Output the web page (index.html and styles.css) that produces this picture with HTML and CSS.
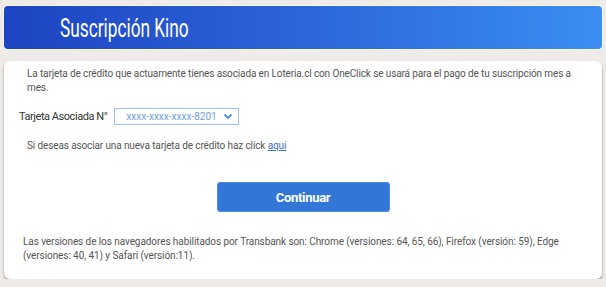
FILE: index.html
```html
<!DOCTYPE html>
<html lang="es">

<head>
  <meta charset="UTF-8" />
  <meta name="viewport" content="width=device-width, initial-scale=1" />
  <title>Suscripción Kino</title>
  <link rel="stylesheet" href="styles.css">
</head>

<body>

  <header class="titulo">
    <h1><span>Suscripción Kino</span></h1>
  </header>

  <div class="card">
    <p class="intro">La tarjeta de crédito que actuamente tienes asociada en Loteria.cl con OneClick se usará para el pago de tu suscripción mes a mes.</p>

    <div class="campo">
      <label for="tarjeta">Tarjeta Asociada N°</label>
      <div class="select">
        <span>xxxx-xxxx-xxxx-8201</span>
        <svg width="10" height="7" viewBox="0 0 10 7"><path d="M1.5 1.5 L5 5 L8.5 1.5" fill="none" stroke="#4a8ee6" stroke-width="1.8"/></svg>
      </div>
    </div>

    <p class="nueva">Si deseas asociar una nueva tarjeta de crédito haz click <a href="#">aquí</a></p>

    <div class="acciones">
      <button>Continuar</button>
    </div>

    <p class="nota">Las versiones de los navegadores habilitados por Transbank son: Chrome (versiones: 64, 65, 66), Firefox (versión: 59), Edge (versiones: 40, 41) y Safari (versión:11).</p>
  </div>

</body>

</html>
```

FILE: styles.css
```css
html,
body {
  font-family: 'Roboto', sans-serif;
  background: #efebe9;
  margin: 0;
  padding: 0;
}

body {
  padding: 6px 4px 0 4px;
}

.titulo {
  height: 43px;
  border-radius: 4px;
  background: linear-gradient(90deg, #1d44c2 0%, #2a62d6 45%, #3b8ef2 100%);
  box-shadow: 0 0 0 1px rgba(255, 255, 255, 0.6);
  display: flex;
  align-items: center;
  padding-left: 56px;
}

.titulo h1 {
  margin: 0 0 -2px 0;
  color: white;
  font-size: 25px;
  font-weight: 400;
}

.titulo h1 span {
  display: inline-block;
  transform: scaleX(0.69);
  transform-origin: left center;
}

.card {
  margin-top: 12px;
  background: white;
  border-radius: 6px;
  box-shadow: 0 2px 3px rgba(0, 0, 0, 0.35);
  padding: 6px 19px 12px 19px;
  height: 200px;
}

.intro {
  margin: 0;
  padding-left: 4px;
  font-size: 10px;
  line-height: 14px;
  letter-spacing: -0.12px;
  color: #555;
}

.campo {
  display: flex;
  align-items: center;
  gap: 7px;
  margin-top: 13px;
  margin-left: -4px;
}

.campo label {
  font-size: 11px;
  letter-spacing: -0.45px;
  color: #333;
}

.select {
  width: 107px;
  height: 15px;
  border: 1px solid #9cc0f3;
  display: flex;
  align-items: center;
  justify-content: space-between;
  padding: 0 5px 0 11px;
  box-sizing: content-box;
}

.select span {
  font-size: 10px;
  letter-spacing: 0;
  color: #6b9ee8;
}

.nueva {
  margin: 15px 0 0 0;
  padding-left: 4px;
  font-size: 10px;
  letter-spacing: -0.12px;
  color: #555;
}

.nueva a {
  color: #3a6fd8;
}

.acciones {
  display: flex;
  justify-content: center;
  margin-top: 31px;
}

.acciones button {
  width: 173px;
  height: 30px;
  background: #3377d6;
  border: 1px solid #4b8ae6;
  border-radius: 3px;
  color: white;
  font-family: 'Roboto', sans-serif;
  font-weight: bold;
  font-size: 13px;
  letter-spacing: -0.3px;
}

.nota {
  margin: 23px 0 0 0;
  font-size: 10px;
  line-height: 14px;
  letter-spacing: -0.08px;
  color: #555;
}
```
